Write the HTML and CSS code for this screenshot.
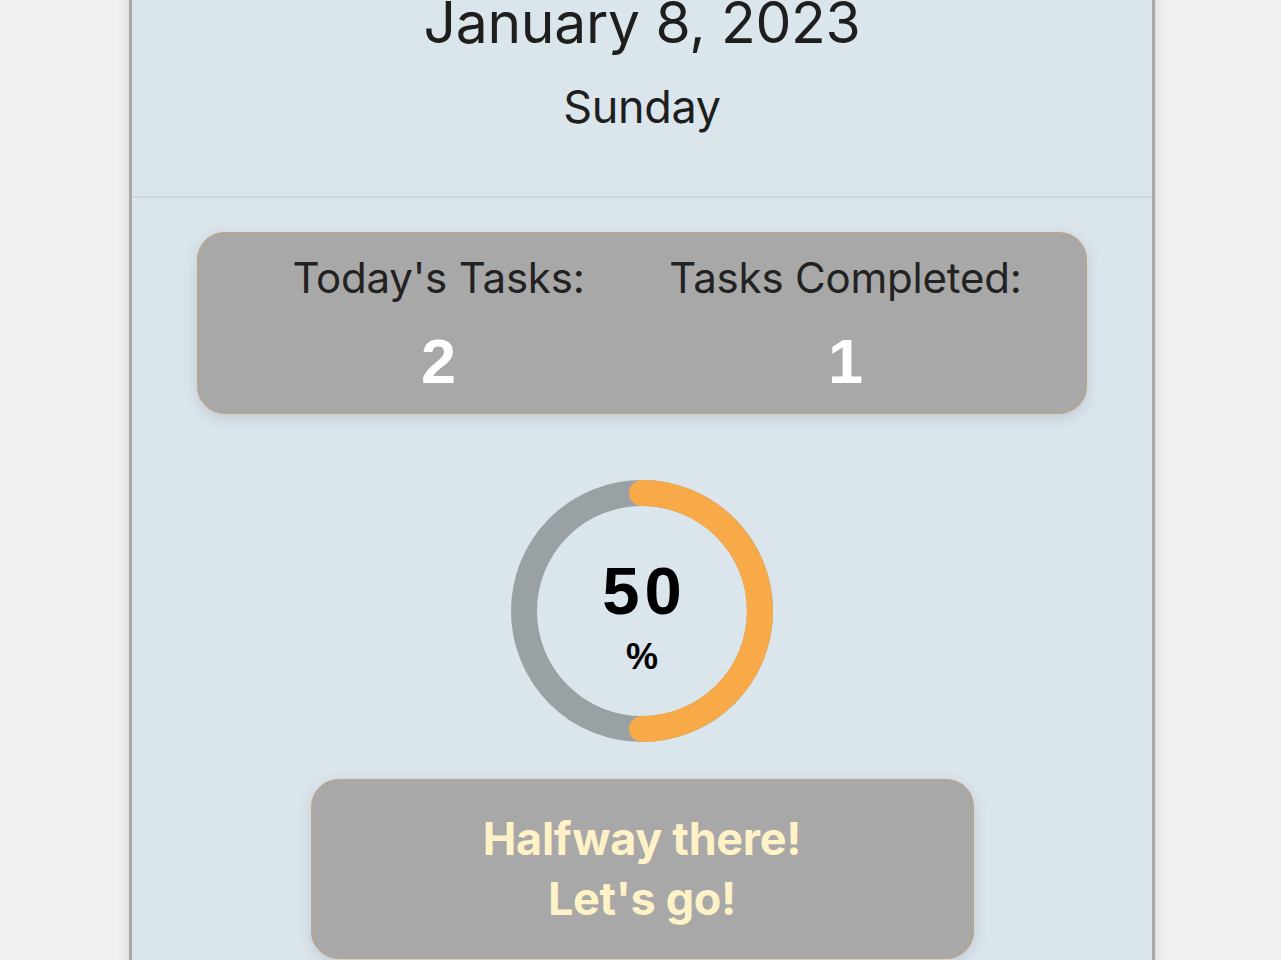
FILE: index.html
```html
<!DOCTYPE html>
<html lang="en">
<head>
<meta charset="utf-8">
<title>Daily Progress</title>
<link rel="stylesheet" href="styles.css">
</head>
<body>
<div class="app">
  <header class="date-header">
    <h1 class="date">January 8, 2023</h1>
    <p class="weekday">Sunday</p>
  </header>
  <main class="content">
    <section class="stats-card">
      <div class="stat">
        <div class="stat-label">Today's Tasks:</div>
        <div class="stat-value">2</div>
      </div>
      <div class="stat">
        <div class="stat-label">Tasks Completed:</div>
        <div class="stat-value">1</div>
      </div>
    </section>
    <section class="progress">
      <svg class="ring" viewBox="0 0 262 262" width="262" height="262">
        <circle cx="131" cy="131" r="118" fill="none" stroke="#9aa1a4" stroke-width="26"/>
        <path d="M131 13 A118 118 0 0 1 131 249" fill="none" stroke="#f8a948" stroke-width="26" stroke-linecap="round"/>
      </svg>
      <div class="ring-label">
        <span class="pct">50</span>
        <span class="pct-sign">%</span>
      </div>
    </section>
    <section class="message-card">
      <p class="message">Halfway there!<br>Let's go!</p>
    </section>
  </main>
</div>
</body>
</html>
```
FILE: styles.css
```css
html, body {
  margin: 0;
  padding: 0;
}
body {
  background: #f1f1f1;
  font-family: "Inter", "Noto Sans", sans-serif;
  color: #1e1e1e;
  overflow: hidden;
}
.app {
  width: 1020px;
  margin: -23px auto 0 calc(50% - 511.5px);
  background: #dbe5ec;
  border-left: 3px solid #a9a9a9;
  border-right: 3px solid #a9a9a9;
  box-shadow: 0 0 12px rgba(0, 0, 0, 0.12);
  min-height: 1200px;
}
.date-header {
  display: flex;
  flex-direction: column;
  align-items: center;
  padding-top: 14px;
  padding-bottom: 64px;
  border-bottom: 2px solid #d2d6d9;
}
.date {
  margin: 0;
  font-size: 57px;
  font-weight: 400;
  line-height: 64px;
  letter-spacing: -0.3px;
}
.weekday {
  margin: 27px 0 0;
  font-size: 45px;
  line-height: 50px;
  letter-spacing: -0.3px;
}
.content {
  display: flex;
  flex-direction: column;
  align-items: center;
  padding-top: 34px;
}
.stats-card {
  box-sizing: border-box;
  width: 890px;
  height: 182px;
  background: #a8a8a8;
  border: 2px solid #b5a592;
  border-radius: 28px;
  box-shadow: 0 4px 14px rgba(60, 80, 100, 0.18);
  display: grid;
  grid-template-columns: 1fr 1fr;
  padding: 0 36px;
}
.stat {
  display: flex;
  flex-direction: column;
  align-items: center;
  padding-top: 19px;
}
.stat-label {
  font-size: 42px;
  line-height: 50px;
  color: #222;
  letter-spacing: -0.2px;
}
.stat-value {
  margin-top: 28px;
  font-family: "Liberation Sans", Arial, sans-serif;
  font-weight: 700;
  font-size: 63px;
  line-height: 60px;
  color: #ffffff;
}
.progress {
  position: relative;
  width: 262px;
  height: 262px;
  margin-top: 66px;
}
.ring {
  display: block;
}
.ring-label {
  position: absolute;
  inset: 0;
  padding-top: 16px;
  display: flex;
  flex-direction: column;
  align-items: center;
  justify-content: center;
  font-family: "Liberation Sans", Arial, sans-serif;
  font-weight: 700;
  color: #000;
}
.pct {
  font-size: 67px;
  line-height: 64px;
  letter-spacing: 5px;
  margin-top: -4px;
  margin-right: -5px;
}
.pct-sign {
  font-size: 36px;
  line-height: 36px;
  margin-top: 16px;
}
.message-card {
  box-sizing: border-box;
  width: 663px;
  height: 180px;
  margin-top: 37px;
  background: #a8a8a8;
  border: 2px solid #b5a592;
  border-radius: 28px;
  box-shadow: 0 4px 14px rgba(60, 80, 100, 0.18);
  display: flex;
  justify-content: center;
  padding-top: 28px;
}
.message {
  margin: 0;
  text-align: center;
  font-size: 45px;
  line-height: 60px;
  font-weight: 700;
  color: #fff2c6;
  letter-spacing: -0.3px;
}
```
